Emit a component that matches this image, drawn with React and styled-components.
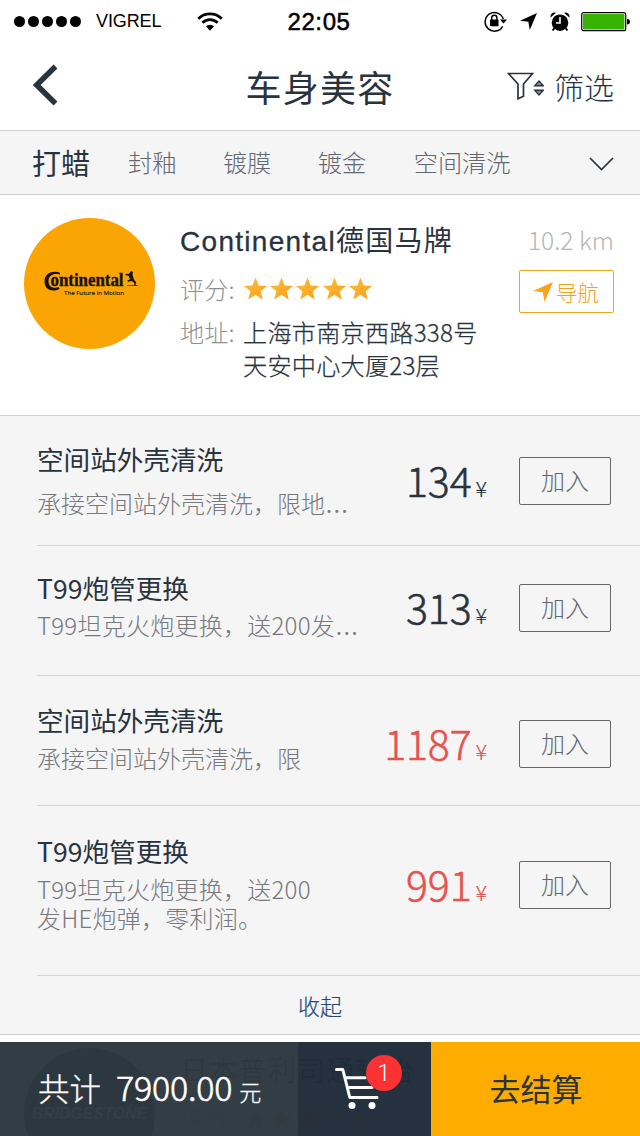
import React from 'react';
import styled, { createGlobalStyle } from 'styled-components';

const cjk = '"Noto Sans CJK SC", sans-serif';
const ink = '#29333e';
const amber = '#ffac00';

const GlobalStyle = createGlobalStyle`
  * { box-sizing: border-box; }
  body { margin: 0; background: #fff; }
  button { margin: 0; padding: 0; background: none; border: 0; font-family: inherit; }
  svg { display: block; flex: none; }
`;

const Screen = styled.div`
  position: relative;
  width: 640px;
  height: 1136px;
  overflow: hidden;
  background: #fff;
  color: ${ink};
  font-family: ${cjk};
  font-weight: 300;
`;

const StatusBar = styled.header`
  display: grid;
  grid-template-columns: 1fr auto 1fr;
  align-items: center;
  height: 43px;
  padding: 0 10px 0 14px;
  color: #000;
  font-family: "Liberation Sans", sans-serif;
  font-weight: 400;
`;
const Signal = styled.div`
  display: flex;
  align-items: center;
`;
const Dots = styled.div`
  display: flex;
  gap: 3px;
  margin-right: 15px;
`;
const Dot = styled.i`
  width: 11px;
  height: 11px;
  border-radius: 50%;
  background: #000;
`;
const Carrier = styled.span`
  width: 101px;
  font-size: 18px;
  letter-spacing: -0.1px;
`;
const Clock = styled.time`
  margin-right: 6px;
  font-size: 24px;
  letter-spacing: 0.6px;
  -webkit-text-stroke: 0.5px #000;
`;
const StatusIcons = styled.div`
  display: flex;
  align-items: center;
  justify-content: flex-end;
`;

const NavBar = styled.nav`
  display: grid;
  grid-template-columns: 1fr auto 1fr;
  align-items: center;
  height: 88px;
  padding: 0 26px 2px 31px;
  border-bottom: 1px solid #cfcfd1;
`;
const BackButton = styled.button`
  padding-bottom: 2px;
  justify-self: start;
`;
const PageTitle = styled.h1`
  margin: 0 5px 0 0;
  font-size: 36px;
  font-weight: 400;
  letter-spacing: 1.3px;
  line-height: 44px;
`;
const FilterButton = styled.button`
  display: flex;
  align-items: center;
  justify-self: end;
  padding-top: 1px;
  color: ${ink};
  font-size: 30px;
  font-weight: 300;
  line-height: 40px;
`;
const FilterLabel = styled.span`
  margin-left: 10px;
`;

const Tabs = styled.div`
  display: flex;
  align-items: center;
  height: 64px;
  padding: 0 26px 1px 32px;
  background: #f5f5f5;
  border-bottom: 1px solid #cfcfd1;
`;
const Tab = styled.button`
  margin-right: ${p => p.$gap}px;
  color: ${p => (p.$active ? ink : '#63676f')};
  font-size: ${p => (p.$active ? 29 : 24.2)}px;
  font-weight: ${p => (p.$active ? 400 : 300)};
  line-height: 40px;
`;
const TabMore = styled.button`
  margin-left: auto;
  padding-top: 4px;
`;

const Shop = styled.section`
  display: flex;
  height: 221px;
  padding: ${p => p.$top}px 26px 0 24px;
  border-bottom: 1px solid #d2d2d4;
`;
const Avatar = styled.div`
  flex: none;
  width: 131px;
  height: 131px;
  border-radius: 50%;
  background: ${p => p.$color};
  overflow: hidden;
`;
const ShopInfo = styled.div`
  flex: 1;
  margin-left: 25px;
`;
const ShopName = styled.h2`
  margin: 0;
  font-family: "Liberation Sans", ${cjk};
  font-size: 28px;
  font-weight: 400;
  letter-spacing: 1.3px;
  line-height: 48px;
  white-space: nowrap;
`;
const LatinName = styled.span`
  -webkit-text-stroke: 0.3px ${ink};
`;
const Field = styled.div`
  display: flex;
  align-items: ${p => p.$align || 'flex-start'};
  font-size: 24.2px;
  line-height: 33px;
  margin-top: ${p => p.$top}px;
`;
const FieldLabel = styled.span`
  width: 63px;
  color: #909090;
`;
const Stars = styled.div`
  display: flex;
  gap: 1.2px;
`;
const Address = styled.div`
  letter-spacing: 0.2px;
  -webkit-text-stroke: 0.25px ${ink};
  white-space: nowrap;
`;
const ShopSide = styled.div`
  display: flex;
  flex-direction: column;
  align-items: flex-end;
`;
const Distance = styled.span`
  color: #b5b5b5;
  font-size: 24.6px;
  line-height: 43px;
`;
const NavigateButton = styled.button`
  display: flex;
  align-items: center;
  justify-content: center;
  gap: 3px;
  width: 95px;
  height: 43px;
  margin-top: 9px;
  padding-right: 1px;
  border: 1px solid #e9a820;
  border-radius: 2px;
  color: #f5a01c;
  font-size: 21.5px;
  font-weight: 300;
  line-height: 39px;
`;
const NavigateLabel = styled.span`
  padding-bottom: 1px;
`;

const ServiceList = styled.ul`
  margin: 0;
  padding: 0 0 0 37px;
  list-style: none;
  background: #f5f5f5;
  border-bottom: 1px solid #cfcfd1;
`;
const Service = styled.li`
  display: grid;
  grid-template-columns: 330px 1fr 92px;
  align-items: start;
  height: ${p => p.$height}px;
  padding-right: 29px;
  border-bottom: 1px solid #d6d6d8;
`;
const ServiceText = styled.div`
  padding-top: ${p => p.$top}px;
  white-space: nowrap;
`;
const ServiceName = styled.h3`
  margin: 0 0 ${p => p.$gap}px;
  font-size: 26.6px;
  font-weight: 400;
  line-height: 32px;
`;
const ServiceNote = styled.p`
  margin: 0;
  color: #77797d;
  font-size: 24px;
  letter-spacing: ${p => p.$spacing || 0}px;
  line-height: 29px;
`;
const Ellipsis = styled.span`
  font-family: "Noto Sans", sans-serif;
  font-size: 32px;
  font-weight: 300;
  letter-spacing: 0;
  line-height: 1px;
`;
const Price = styled.div`
  display: flex;
  align-items: baseline;
  justify-content: flex-end;
  margin-top: ${p => p.$top}px;
  padding-right: 32px;
  color: ${p => (p.$sale ? '#e5534f' : ink)};
  font-size: 41px;
  line-height: 48px;
  letter-spacing: -0.1px;
  -webkit-text-stroke: 0.55px currentColor;
`;
const Currency = styled.span`
  margin-left: 4px;
  font-size: 21.5px;
  letter-spacing: 0;
  -webkit-text-stroke: 0.15px currentColor;
`;
const AddButton = styled.button`
  height: 48px;
  margin-top: ${p => p.$top}px;
  border: 1px solid #65676b;
  border-radius: 2px;
  color: #63676f;
  font-size: 24px;
  font-weight: 300;
  line-height: 44px;
  padding-bottom: 2px;
`;
const Collapse = styled.button`
  display: block;
  width: 603px;
  height: 58px;
  padding: 0 37px 0 0;
  color: #1f4a75;
  font-size: 22px;
  font-weight: 300;
  -webkit-text-stroke: 0.2px #1f4a75;
`;

const CheckoutBar = styled.footer`
  position: absolute;
  left: 0;
  right: 0;
  bottom: 0;
  display: grid;
  grid-template-columns: 298px 133px 1fr;
  height: 94px;
`;
const Total = styled.div`
  display: flex;
  align-items: baseline;
  padding: 20px 0 0 38px;
  background: rgba(46, 56, 66, 0.975);
  color: #fff;
  font-size: 31.5px;
  line-height: 50px;
  white-space: nowrap;
  -webkit-text-stroke: 0.3px #fff;
`;
const Amount = styled.span`
  margin: 0 7px 0 15px;
  font-size: 34px;
  letter-spacing: -0.2px;
  -webkit-text-stroke: 0.6px #fff;
`;
const Unit = styled.span`
  font-size: 22px;
`;
const Cart = styled.button`
  position: relative;
  display: flex;
  align-items: flex-start;
  padding: 24px 0 0 36px;
  background: rgba(33, 44, 58, 0.975);
`;
const CartBadge = styled.span`
  position: absolute;
  top: 13px;
  left: 68px;
  width: 36px;
  height: 36px;
  border-radius: 50%;
  background: #fb3233;
  color: #fff;
  font-family: Roboto, sans-serif;
  font-size: 23px;
  font-weight: 300;
  line-height: 38px;
  text-align: center;
`;
const Checkout = styled.button`
  background: ${amber};
  color: ${ink};
  font-size: 31px;
  font-weight: 400;
  line-height: 90px;
  padding: 0 0 3px 1px;
`;

const Star = () => (
  <svg width="25" height="25" viewBox="0 0 24 24">
    <defs>
      <linearGradient id="star" x1="0" y1="0" x2="1" y2="1">
        <stop offset="0.3" stopColor="#fcb52e" />
        <stop offset="1" stopColor="#f99d1e" />
      </linearGradient>
    </defs>
    <path fill="url(#star)" d="M12 1.500l3 7.500 8.200.5-6.300 5.100 2.100 7.900-7-4.400-7 4.400 2.100-7.900L.8 9.500 9 9z" />
  </svg>
);

const Arrow = ({ size, color, style }) => (
  <svg width={size} height={size} viewBox="0 0 20 20" style={style}>
    <path d="M20 0L11.500 20 9.800 10.300 0 9z" fill={color} />
  </svg>
);

const ContinentalLogo = () => (
  <svg width="131" height="131" viewBox="0 0 131 131">
    <g fill="#17130c">
      <path d="M36 54.800C30 52 20.500 54.500 20.500 63.300c0 8.700 8 11.200 15 7.700l-.7-1.900c-5 1.900-10.300 0-10.300-5.800 0-6.200 5-8.200 11.500-6.800z" />
      <text x="26.500" y="68.300" fontFamily="Liberation Serif, serif" fontWeight="700" fontSize="18" textLength="73" lengthAdjust="spacingAndGlyphs" stroke="#17130c" strokeWidth="0.400">ontinental</text>
      <path d="M101.500 56l3.500-.3 2-2.700 2 1-.5 3 1.500 4.500 2 2.500-.5 4-1-.2-.3-3-2.700-1.800-3 .8-1.500-1 3-1.500-1.500-3.500-3-.5zM103 67.500l10.500-.5v.7l-10.500.3z" />
      <text x="40" y="76.800" fontFamily="Open Sans, sans-serif" fontWeight="400" fontSize="6" textLength="60" lengthAdjust="spacingAndGlyphs" stroke="#17130c" strokeWidth="0.150">The Future in Motion</text>
    </g>
  </svg>
);

const BridgestoneLogo = () => (
  <svg width="131" height="131" viewBox="0 0 131 131">
    <text x="8" y="71" fontFamily="Liberation Sans, sans-serif" fontStyle="italic" fontWeight="700" fontSize="17" textLength="115" lengthAdjust="spacingAndGlyphs" fill="#fff">BRIDGESTONE</text>
  </svg>
);

const services = [
  { name: '空间站外壳清洗', note: ['承接空间站外壳清洗，限地'], more: true, price: 134, height: 130, top: 27, gap: 13, action: 41 },
  { name: 'T99炮管更换', note: ['T99坦克火炮更换，送200发'], more: true, spacing: 0.25, price: 313, height: 130, top: 26, gap: 6, action: 38 },
  { name: '空间站外壳清洗', note: ['承接空间站外壳清洗，限'], price: 1187, sale: true, height: 130, top: 28, gap: 7, action: 44 },
  { name: 'T99炮管更换', note: ['T99坦克火炮更换，送200', '发HE炮弹，零利润。'], spacing: 0.25, price: 991, sale: true, height: 170, top: 29, gap: 7, action: 55 },
];

const tabs = [
  { label: '打蜡', gap: 38 },
  { label: '封釉', gap: 46.5 },
  { label: '镀膜', gap: 46.5 },
  { label: '镀金', gap: 47.5 },
  { label: '空间清洗', gap: 0 },
];

export default function App() {
  return (
    <Screen>
      <GlobalStyle />
      <StatusBar>
        <Signal>
          <Dots>{[0, 1, 2, 3, 4].map(i => <Dot key={i} />)}</Dots>
          <Carrier>VIGREL</Carrier>
          <svg width="26" height="20" viewBox="0 0 26 20" fill="none" stroke="#000" strokeWidth="2.800">
            <path d="M1.300 6.700a16.500 16.500 0 0 1 23.400 0M5.400 10.800a10.700 10.700 0 0 1 15.200 0" />
            <path d="M9 14.300a5.700 5.700 0 0 1 8 0L13 18.700z" fill="#000" stroke="none" />
          </svg>
        </Signal>
        <Clock>22:05</Clock>
        <StatusIcons>
          <svg width="24" height="22" viewBox="0 0 24 22">
            <path d="M18.600 15.300A9.300 9.300 0 1 1 19.300 8" fill="none" stroke="#000" strokeWidth="1.500" />
            <path d="M16 8.500h7l-3.500 4z" />
            <rect x="6" y="8.500" width="8.500" height="6.700" rx="0.800" />
            <path d="M7.700 9V6.800a2.600 2.600 0 0 1 5.200 0V9" fill="none" stroke="#000" strokeWidth="1.500" />
          </svg>
          <Arrow size={17} color="#000" style={{ marginLeft: 12, marginRight: 13 }} />
          <svg width="20" height="20" viewBox="0 0 20 20">
            <circle cx="10" cy="10.700" r="8.300" />
            <path d="M4.500 16L2.500 18.500M15.500 16l2 2.500" stroke="#000" strokeWidth="2" />
            <path d="M.6 5.500A4 4 0 0 1 6 .8zM19.400 5.500A4 4 0 0 0 14 .8z" />
            <path d="M10 5v6H6" fill="none" stroke="#fff" strokeWidth="1.600" />
          </svg>
          <svg width="50" height="20" viewBox="0 0 50 20" style={{ marginLeft: 11, marginRight: -1 }}>
            <rect x="0.700" y="0.700" width="44" height="18" rx="2" fill="#fff" stroke="#000" strokeWidth="1.200" />
            <rect x="2" y="2" width="41.400" height="15.400" rx="0.800" fill="#38b400" />
            <path d="M46 7c4 0 4 5.500 0 5.500z" />
          </svg>
        </StatusIcons>
      </StatusBar>

      <NavBar>
        <BackButton aria-label="返回">
          <svg width="27" height="42" viewBox="0 0 27 42" fill="none" stroke={ink} strokeWidth="5.500">
            <path d="M24.500 2.500L5.700 21l18.800 18.500" />
          </svg>
        </BackButton>
        <PageTitle>车身美容</PageTitle>
        <FilterButton>
          <svg width="37" height="28" viewBox="0 0 37 28" fill="none" stroke={ink} strokeWidth="1.700">
            <path d="M1.500 1.500h24l-9 10.500v12.200l-5.500 2.600V12z" />
            <path d="M27.800 13.700L32 9l4.200 4.700zM27.800 18.300L32 23l4.200-4.700z" fill="#8b9299" strokeWidth="1.400" />
          </svg>
          <FilterLabel>筛选</FilterLabel>
        </FilterButton>
      </NavBar>

      <Tabs>
        {tabs.map((t, i) => (
          <Tab key={t.label} $active={i === 0} $gap={t.gap}>{t.label}</Tab>
        ))}
        <TabMore aria-label="更多">
          <svg width="25" height="14" viewBox="0 0 25 14" fill="none" stroke={ink} strokeWidth="1.700">
            <path d="M1 1l11.500 11.500L24 1" />
          </svg>
        </TabMore>
      </Tabs>

      <Shop $top={23}>
        <Avatar $color="#fba504"><ContinentalLogo /></Avatar>
        <ShopInfo>
          <ShopName><LatinName>Continental</LatinName>德国马牌</ShopName>
          <Field $top={6} $align="center">
            <FieldLabel>评分:</FieldLabel>
            <Stars>{[0, 1, 2, 3, 4].map(i => <Star key={i} />)}</Stars>
          </Field>
          <Field $top={10}>
            <FieldLabel>地址:</FieldLabel>
            <Address>上海市南京西路338号<br />天安中心大厦23层</Address>
          </Field>
        </ShopInfo>
        <ShopSide>
          <Distance>10.2 km</Distance>
          <NavigateButton><Arrow size={20} color="#fba31c" /><NavigateLabel>导航</NavigateLabel></NavigateButton>
        </ShopSide>
      </Shop>

      <ServiceList>
        {services.map((s, i) => (
          <Service key={i} $height={s.height}>
            <ServiceText $top={s.top}>
              <ServiceName $gap={s.gap}>{s.name}</ServiceName>
              {s.note.map(line => (
                <ServiceNote key={line} $spacing={s.spacing}>{line}{s.more && <Ellipsis>…</Ellipsis>}</ServiceNote>
              ))}
            </ServiceText>
            <Price $sale={s.sale} $top={s.action - 2}>{s.price}<Currency>¥</Currency></Price>
            <AddButton $top={s.action}>加入</AddButton>
          </Service>
        ))}
        <li><Collapse>收起</Collapse></li>
      </ServiceList>

      <Shop $top={13}>
        <Avatar $color="#111"><BridgestoneLogo /></Avatar>
        <ShopInfo>
          <ShopName>日本普利司通轮胎</ShopName>
          <Field $top={6} $align="center">
            <FieldLabel>评分:</FieldLabel>
            <Stars>{[0, 1, 2, 3, 4].map(i => <Star key={i} />)}</Stars>
          </Field>
        </ShopInfo>
      </Shop>

      <CheckoutBar>
        <Total>共计<Amount>7900.00</Amount><Unit>元</Unit></Total>
        <Cart aria-label="购物车">
          <svg width="46" height="46" viewBox="0 0 46 46" fill="none" stroke="#fff" strokeWidth="3" strokeLinecap="round" strokeLinejoin="round">
            <path d="M2.500 3.500h6.300l7 28H43M11.500 11.800H31M13.500 21.500H38" />
            <circle cx="18" cy="39.500" r="3.500" fill="#fff" stroke="none" />
            <circle cx="38" cy="39.500" r="3.500" fill="#fff" stroke="none" />
          </svg>
          <CartBadge>1</CartBadge>
        </Cart>
        <Checkout>去结算</Checkout>
      </CheckoutBar>
    </Screen>
  );
}
